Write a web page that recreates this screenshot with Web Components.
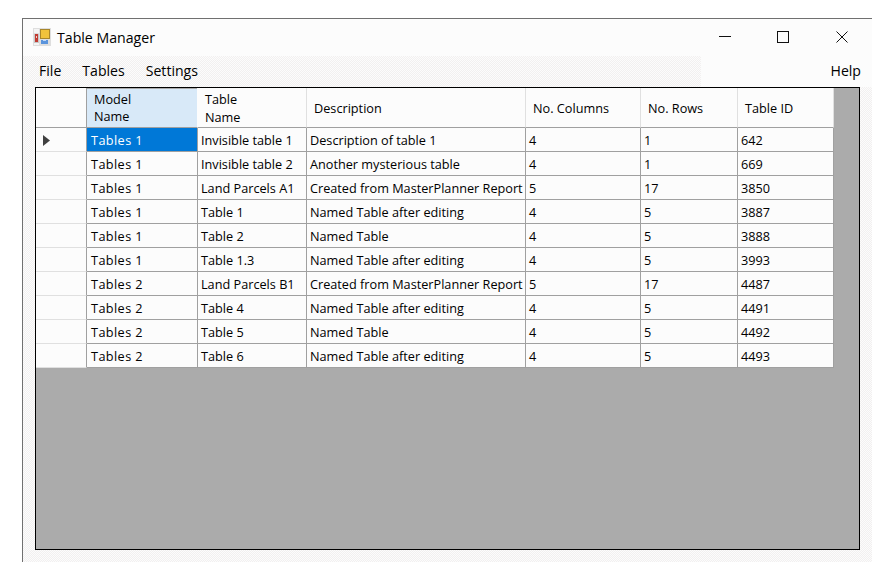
<!DOCTYPE html>
<html>
<head>
<meta charset="utf-8">
<title>Table Manager</title>
<style>
    html, body { margin: 0; padding: 0; background: #fff; }
    body { font-family: "Open Sans", "Liberation Sans", sans-serif; color: #000; }
</style>
</head>
<body>
<win-form title-text="Table Manager">
    <menu-bar slot="menu">
        <span>File</span>
        <span>Tables</span>
        <span>Settings</span>
        <span slot="end">Help</span>
    </menu-bar>
    <data-grid id="grid"></data-grid>
</win-form>

<script>
    class WinForm extends HTMLElement {
        constructor() {
            super();
            this.attachShadow({ mode: 'open' });
        }

        connectedCallback() {
            const title = this.getAttribute('title-text') || '';
            this.shadowRoot.innerHTML = `
                <style>
                    :host {
                        display: flex;
                        flex-direction: column;
                        box-sizing: border-box;
                        width: 850px;
                        height: 544px;
                        margin: 18px 0 0 22px;
                        border-top: 1px solid #707070;
                        border-left: 1px solid #707070;
                        background: repeating-conic-gradient(#f2f0f0 0 25%, #fcfcfc 0 50%) 0 0 / 2px 2px;
                    }
                    .titlebar {
                        display: flex;
                        align-items: center;
                        height: 36px;
                        border-bottom: 1px solid #fcfcfc;
                        background: #fcfcfc;
                        padding-left: 10px;
                    }
                    .titlebar svg.logo { width: 18px; height: 18px; flex: none; }
                    .title { margin-left: 6px; font-size: 14.15px; color: #000; }
                    .buttons { margin-left: auto; display: grid; grid-template-columns: 58px 58px 60px; }
                    .buttons div {
                        height: 36px;
                        display: flex;
                        align-items: center;
                        justify-content: center;
                    }
                    .buttons svg { display: block; }
                    .body {
                        flex: 1;
                        min-height: 0;
                        display: flex;
                        padding: 0 12px 12px 12px;
                    }
                    ::slotted(data-grid) { flex: 1; min-width: 0; }
                </style>
                <div class="titlebar">
                    <svg class="logo" viewBox="0 0 18 18">
                        <rect x="0" y="0" width="18" height="18" fill="#dedede"/>
                        <rect x="1" y="1" width="5" height="4" fill="#f4f4f4"/>
                        <rect x="1" y="15" width="5" height="2" fill="#f4f4f4"/>
                        <rect x="1" y="6" width="5" height="9" fill="#c8c8c8"/>
                        <rect x="2" y="6" width="3" height="8" fill="#c23a32"/>
                        <rect x="3" y="8" width="1" height="2" fill="#f4d0c8"/>
                        <rect x="7" y="1" width="10" height="10" fill="#a8862c"/>
                        <rect x="8" y="2" width="8" height="8" fill="#f0c23c"/>
                        <rect x="8" y="12" width="7" height="4" fill="#5a94dc"/>
                        <rect x="10" y="12" width="3" height="1" fill="#bcd6f6"/>
                    </svg>
                    <span class="title">${title}</span>
                    <div class="buttons">
                        <div><svg width="12" height="12" viewBox="0 0 12 12"><path d="M0 5.5H12" stroke="#111" fill="none"/></svg></div>
                        <div><svg width="12" height="12" viewBox="0 0 12 12"><rect x="0.5" y="0.5" width="11" height="11" stroke="#111" fill="none"/></svg></div>
                        <div><svg width="12" height="12" viewBox="0 0 12 12"><path d="M0.5 0.5L11.5 11.5M11.5 0.5L0.5 11.5" stroke="#111" fill="none"/></svg></div>
                    </div>
                </div>
                <slot name="menu"></slot>
                <div class="body"><slot></slot></div>
            `;
        }
    }

    class MenuBar extends HTMLElement {
        constructor() {
            super();
            this.attachShadow({ mode: 'open' });
        }

        connectedCallback() {
            this.shadowRoot.innerHTML = `
                <style>
                    :host {
                        display: flex;
                        align-items: center;
                        box-sizing: border-box;
                        height: 31px;
                        padding: 0 11px 2px 16px;
                        font-size: 14.1px;
                        color: #000;
                        background: linear-gradient(to right, transparent 678px, #fcfcfc 678px);
                    }
                    .items { display: flex; gap: 21px; }
                    .end { margin-left: auto; }
                </style>
                <div class="items"><slot></slot></div>
                <div class="end"><slot name="end"></slot></div>
            `;
        }
    }

    class DataGrid extends HTMLElement {
        constructor() {
            super();
            this.attachShadow({ mode: 'open' });
        }

        set data(value) {
            this._data = value;
            this.render();
        }

        render() {
            const { columns, rows } = this._data;
            const widths = '51px 111px 109px 219px 115px 97px 96px';
            let head = `<div class="hd corner"></div>`;
            columns.forEach((c, i) => {
                head += `<div class="hd${i === 0 ? ' sel' : ''}"><span>${c}</span></div>`;
            });
            let body = '';
            rows.forEach((r, i) => {
                body += `<div class="rh">${i === 0 ? '<svg width="7" height="11" viewBox="0 0 7 11"><path d="M0 0L7 5.5L0 11Z" fill="#404040"/></svg>' : ''}</div>`;
                r.forEach((v, j) => {
                    const cls = (j === 0 ? ' model' : '') + (i === 0 && j === 0 ? ' cur' : '');
                    body += `<div class="td${cls}">${v}</div>`;
                });
            });
            this.shadowRoot.innerHTML = `
                <style>
                    :host {
                        display: block;
                        box-sizing: border-box;
                        border: 1px solid #000;
                        background: #ababab;
                        font-size: 12.7px;
                        color: #000;
                    }
                    .table {
                        display: grid;
                        grid-template-columns: ${widths};
                        grid-template-rows: 40px repeat(${rows.length}, 24px);
                        width: max-content;
                    }
                    .hd, .td, .rh { box-sizing: border-box; background: #fcfcfc; }
                    .hd {
                        display: flex;
                        align-items: center;
                        padding: 2px 0 0 7px;
                        line-height: 17.4px;
                        border-right: 1px solid #e0e0e0;
                        border-bottom: 1px solid #a0a0a0;
                    }
                    .hd.sel {
                        background: #d8e9f8 content-box;
                        padding: 1px 0 0 0;
                        border-right-color: #fcfcfc;
                    }
                    .hd.sel span { padding-left: 7px; }
                    .hd.corner { border-right: 1px solid #a0a0a0; }
                    .td {
                        display: flex;
                        align-items: center;
                        padding: 0 0 0 3px;
                        white-space: nowrap;
                        overflow: hidden;
                        border-right: 1px solid #a0a0a0;
                        border-bottom: 1px solid #a0a0a0;
                    }
                    .td.model { padding-left: 4px; letter-spacing: 0.4px; }
                    .td.cur { background: #0078d7; color: #fff; }
                    .rh {
                        display: flex;
                        align-items: center;
                        padding: 2px 0 0 7px;
                        border-right: 1px solid #a0a0a0;
                        border-bottom: 1px solid #e0e0e0;
                    }
                </style>
                <div class="table">${head}${body}</div>
            `;
        }
    }

    customElements.define('win-form', WinForm);
    customElements.define('menu-bar', MenuBar);
    customElements.define('data-grid', DataGrid);

    document.getElementById('grid').data = {
        columns: ['Model<br>Name', 'Table<br>Name', 'Description', 'No. Columns', 'No. Rows', 'Table ID'],
        rows: [
            ['Tables 1', 'Invisible table 1', 'Description of table 1', '4', '1', '642'],
            ['Tables 1', 'Invisible table 2', 'Another mysterious table', '4', '1', '669'],
            ['Tables 1', 'Land Parcels A1', 'Created from MasterPlanner Report', '5', '17', '3850'],
            ['Tables 1', 'Table 1', 'Named Table after editing', '4', '5', '3887'],
            ['Tables 1', 'Table 2', 'Named Table', '4', '5', '3888'],
            ['Tables 1', 'Table 1.3', 'Named Table after editing', '4', '5', '3993'],
            ['Tables 2', 'Land Parcels B1', 'Created from MasterPlanner Report', '5', '17', '4487'],
            ['Tables 2', 'Table 4', 'Named Table after editing', '4', '5', '4491'],
            ['Tables 2', 'Table 5', 'Named Table', '4', '5', '4492'],
            ['Tables 2', 'Table 6', 'Named Table after editing', '4', '5', '4493']
        ]
    };
</script>
</body>
</html>
